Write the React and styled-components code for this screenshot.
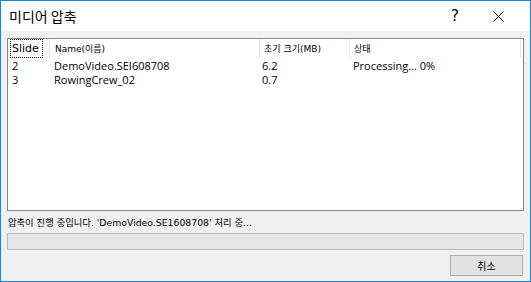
import React from "react";
import styled, { createGlobalStyle } from "styled-components";

const Global = createGlobalStyle`
  html, body { margin: 0; padding: 0; background: #f0f0f0; }
  body { font-family: "DejaVu Sans", "Noto Sans CJK KR", sans-serif; }
`;

const Window = styled.div`
  box-sizing: border-box;
  width: 531px;
  height: 282px;
  border: 1px solid #1883d7;
  background: #f0f0f0;
  display: flex;
  flex-direction: column;
`;

const TitleBar = styled.div`
  height: 30px;
  background: #ffffff;
  display: flex;
  align-items: center;
  flex-shrink: 0;
`;

const Title = styled.div`
  flex: 1;
  padding-left: 8px;
  font-family: "Noto Sans CJK KR", sans-serif;
  font-size: 14px;
  color: #000;
  padding-bottom: 1px;
`;

const TitleButton = styled.div`
  width: ${(p) => p.$w}px;
  height: 30px;
  display: flex;
  align-items: center;
  justify-content: center;
  font-family: "DejaVu Sans", sans-serif;
  font-size: 15px;
  color: #000;
`;

const Body = styled.div`
  flex: 1;
  display: flex;
  flex-direction: column;
  padding: 7px 6px 0 6px;
`;

const List = styled.div`
  box-sizing: border-box;
  height: 173px;
  border: 1px solid #828790;
  background: #fff;
  display: flex;
  flex-direction: column;
`;

const HeaderRow = styled.div`
  display: grid;
  grid-template-columns: 42px 210px 90px 171px;
  height: 19px;
  align-items: stretch;
`;

const HeaderCell = styled.div`
  position: relative;
  display: flex;
  align-items: center;
  padding-left: ${(p) => p.$pl}px;
  font-family: "DejaVu Sans", "Noto Sans CJK KR", sans-serif;
  font-size: ${(p) => (p.$big ? 11 : 9)}px;
  color: #000;
  border-right: 1px solid #e5e5e5;
  white-space: nowrap;
`;

const Focus = styled.span`
  outline: 1px dotted #000;
  padding: 2px 3px 2px 1px;
  margin-left: -1px;
`;

const Row = styled.div`
  display: grid;
  grid-template-columns: 42px 210px 90px 171px;
  height: 14px;
  align-items: center;
  font-family: "Open Sans", sans-serif;
  font-size: 11px;
  color: #000;
  white-space: nowrap;
`;

const Cell = styled.div`
  padding-left: ${(p) => p.$pl}px;
`;

const Status = styled.div`
  margin-top: 4px;
  height: 15px;
  padding-left: 1px;
  font-family: "DejaVu Sans", "Noto Sans CJK KR", sans-serif;
  font-size: 9.3px;
  color: #000;
  white-space: nowrap;
`;

const Progress = styled.div`
  box-sizing: border-box;
  margin-top: 3px;
  height: 17px;
  border: 1px solid #bcbcbc;
  background: #e6e6e6;
`;

const Footer = styled.div`
  display: flex;
  justify-content: flex-end;
  margin-top: 5px;
  padding-right: 1px;
`;

const Button = styled.button`
  box-sizing: border-box;
  width: 73px;
  height: 21px;
  border: 1px solid #adadad;
  background: #e1e1e1;
  font-family: "Noto Sans CJK KR", sans-serif;
  font-size: 10px;
  color: #000;
  padding: 0;
`;

export default function App() {
  return (
    <>
      <Global />
      <Window>
        <TitleBar>
          <Title>미디어 압축</Title>
          <TitleButton $w={22}>?</TitleButton>
          <TitleButton $w={64}>
            <svg width="11" height="11" viewBox="0 0 11 11">
              <path d="M0.5 0.5 L10.5 10.5 M10.5 0.5 L0.5 10.5" stroke="#000" strokeWidth="1" fill="none" />
            </svg>
          </TitleButton>
        </TitleBar>
        <Body>
          <List>
            <HeaderRow>
              <HeaderCell $pl={4} $big>
                <Focus>Slide</Focus>
              </HeaderCell>
              <HeaderCell $pl={5}>Name(이름)</HeaderCell>
              <HeaderCell $pl={4}>초기 크기(MB)</HeaderCell>
              <HeaderCell $pl={4}>상태</HeaderCell>
            </HeaderRow>
            <Row>
              <Cell $pl={4}>2</Cell>
              <Cell $pl={4}>DemoVideo.SEI608708</Cell>
              <Cell $pl={2}>6.2</Cell>
              <Cell $pl={3}>Processing... 0%</Cell>
            </Row>
            <Row>
              <Cell $pl={4}>3</Cell>
              <Cell $pl={4}>RowingCrew_02</Cell>
              <Cell $pl={2}>0.7</Cell>
              <Cell $pl={3}></Cell>
            </Row>
          </List>
          <Status>압축이 진행 중입니다. 'DemoVideo.SE1608708' 처리 중...</Status>
          <Progress />
          <Footer>
            <Button>취소</Button>
          </Footer>
        </Body>
      </Window>
    </>
  );
}
